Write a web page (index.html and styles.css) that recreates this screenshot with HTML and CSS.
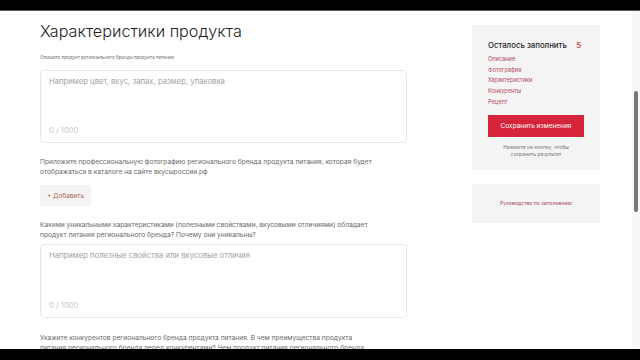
FILE: index.html
```html
<!DOCTYPE html>
<html lang="ru">
<head>
    <meta charset="UTF-8">
    <meta name="viewport" content="width=device-width, initial-scale=1.0">
    <title>Характеристики продукта</title>
    <link rel="stylesheet" href="styles.css">
</head>
<body>
    <div class="letterbox"></div>

    <div class="screen">
        <main class="form">
            <h1>Характеристики продукта</h1>

            <label class="label label-small" for="description">Опишите продукт регионального бренда продукта питания</label>
            <div class="field field-first">
                <textarea id="description" class="field-input" placeholder="Например цвет, вкус, запах, размер, упаковка"></textarea>
                <span class="field-count">0 / 1000</span>
            </div>

            <p class="label">Приложите профессиональную фотографию регионального бренда продукта питания, которая будет<br>отображаться в каталоге на сайте вкусыроссии.рф</p>
            <button class="add-button">+ Добавить</button>

            <label class="label" for="features">Какими уникальными характеристиками (полезными свойствами, вкусовыми отличиями) обладает<br>продукт питания регионального бренда? Почему они уникальны?</label>
            <div class="field">
                <textarea id="features" class="field-input" placeholder="Например полезные свойства или вкусовые отличия"></textarea>
                <span class="field-count">0 / 1000</span>
            </div>

            <p class="label label-last">Укажите конкурентов регионального бренда продукта питания. В чем преимущества продукта<br>питания регионального бренда перед конкурентами? Чем продукт питания регионального бренда</p>
        </main>

        <aside class="sidebar">
            <div class="card">
                <div class="card-head">
                    <span>Осталось заполнить</span>
                    <span class="counter">5</span>
                </div>
                <ul class="todo">
                    <li>Описание</li>
                    <li>Фотография</li>
                    <li>Характеристики</li>
                    <li>Конкуренты</li>
                    <li>Рецепт</li>
                </ul>
                <button class="save-button">Сохранить изменения</button>
                <p class="note">Нажмите на кнопку, чтобы<br>сохранить результат</p>
            </div>

            <div class="card card-guide">
                <a class="guide-link" href="#">Руководство по заполнению</a>
            </div>
        </aside>

        <div class="scrollbar">
            <div class="scroll-thumb"></div>
        </div>
    </div>

    <div class="letterbox letterbox-bottom"></div>
</body>
</html>
```

FILE: styles.css
```css
html, body {
    margin: 0;
    padding: 0;
    width: 640px;
    height: 360px;
    overflow: hidden;
    background: #000;
    font-family: Inter, "Noto Sans", sans-serif;
}

.letterbox {
    height: 10px;
    background: #000;
}

.letterbox-bottom {
    height: 11px;
}

.screen {
    height: 338px;
    border-top: 1px solid #5c5c5c;
    background: #fff;
    display: flex;
    overflow: hidden;
}

.form {
    width: 367px;
    padding: 9px 0 0 40px;
    flex-shrink: 0;
}

h1 {
    margin: 0;
    font-size: 16.2px;
    line-height: 22px;
    font-weight: 300;
    color: #1e1e1e;
}

.label {
    display: block;
    margin: 14px 0 0;
    font-size: 6.65px;
    line-height: 10px;
    color: #6a6a6a;
    white-space: nowrap;
}

.label-small {
    margin-top: 11px;
    font-size: 4.6px;
}

.label-last {
    margin-top: 15px;
}

.field {
    margin-top: 4px;
    height: 74px;
    box-sizing: border-box;
    border: 1px solid #e8e8e8;
    border-radius: 4px;
    padding: 5px 8px 5px;
    display: flex;
    flex-direction: column;
}

.field-first {
    margin-top: 7px;
    height: 73px;
}

.field-input {
    flex: 1;
    border: none;
    padding: 0;
    margin: 0;
    resize: none;
    outline: none;
    font-family: inherit;
    font-size: 7.7px;
    line-height: 12px;
    color: #333;
    background: transparent;
}

.field-input::placeholder {
    color: #a3a3a3;
}

.field-count {
    font-size: 7.6px;
    line-height: 12px;
    color: #cacaca;
}

.add-button {
    display: block;
    margin-top: 8px;
    width: 51px;
    height: 21px;
    padding: 0;
    border: none;
    border-radius: 2px;
    background: #f5f3f3;
    font-family: inherit;
    font-size: 6.5px;
    color: #a86a55;
    cursor: pointer;
}

.sidebar {
    width: 128px;
    margin: 14px 0 0 65px;
    flex-shrink: 0;
}

.card {
    background: #f4f4f4;
    padding: 14px 16px 12px;
}

.card-head {
    display: flex;
    justify-content: space-between;
    font-size: 7.8px;
    line-height: 12px;
    font-weight: 500;
    color: #1e1e1e;
}

.counter {
    color: #c2334b;
    padding-right: 3px;
}

.todo {
    list-style: none;
    margin: 3px 0 0;
    padding: 0;
}

.todo li {
    font-size: 5.6px;
    line-height: 10.7px;
    color: #b44a5e;
}

.save-button {
    display: block;
    width: 100%;
    height: 22px;
    margin-top: 7px;
    border: none;
    background: #d5243a;
    color: #fff;
    font-family: inherit;
    font-size: 6.5px;
    cursor: pointer;
}

.note {
    margin: 7px 0 0;
    font-size: 5px;
    line-height: 7px;
    text-align: center;
    color: #7a7a7a;
}

.card-guide {
    margin-top: 14px;
    height: 39px;
    padding: 0;
    display: flex;
    align-items: center;
    justify-content: center;
}

.guide-link {
    font-size: 5.1px;
    color: #a8465a;
    text-decoration: none;
}

.scrollbar {
    width: 8px;
    margin-left: 32px;
    background: #f8f8f8;
    flex-shrink: 0;
}

.scroll-thumb {
    width: 4px;
    height: 121px;
    margin: 80px 0 0 2px;
    border-radius: 2px;
    background: #777;
}
```
